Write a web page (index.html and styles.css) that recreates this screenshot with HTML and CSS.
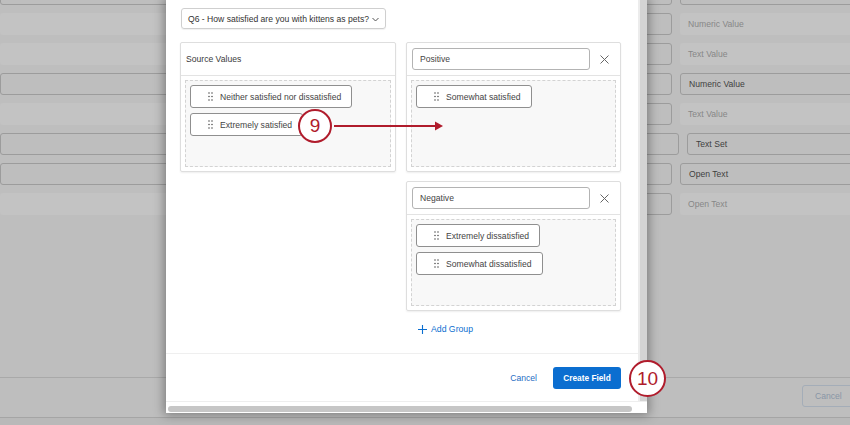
FILE: index.html
```html
<!DOCTYPE html>
<html lang="en">
<head>
    <meta charset="UTF-8">
    <meta name="viewport" content="width=device-width, initial-scale=1.0">
    <title>Create Field - Bucket values</title>
    <link rel="stylesheet" href="styles.css">
</head>
<body>
    <!-- page behind the dialog, dimmed -->
    <div class="page">
        <div class="rows">
            <div class="row bordered"><div class="wide"></div><div class="small"></div><div class="type"></div></div>
            <div class="row faint"><div class="wide"></div><div class="small"></div><div class="type">Numeric Value</div></div>
            <div class="row faint"><div class="wide"></div><div class="small"></div><div class="type">Text Value</div></div>
            <div class="row bordered"><div class="wide"></div><div class="small"></div><div class="type">Numeric Value</div></div>
            <div class="row faint"><div class="wide"></div><div class="small"></div><div class="type">Text Value</div></div>
            <div class="row bordered indent"><div class="wide"></div><div class="small"></div><div class="type">Text Set</div></div>
            <div class="row bordered"><div class="wide"></div><div class="small"></div><div class="type">Open Text</div></div>
            <div class="row faint"><div class="wide"></div><div class="small"></div><div class="type">Open Text</div></div>
        </div>
        <div class="page-footer">
            <div class="page-cancel">Cancel</div>
        </div>
        <div class="page-bottom"></div>
    </div>

    <div class="modal">
        <div class="modal-main">
            <div class="modal-content">
                <div class="content">
                    <div class="question-select">
                        <span>Q6 - How satisfied are you with kittens as pets?</span>
                        <svg class="chevron" width="7" height="5" viewBox="0 0 7 5"><polyline points="0.5,1 3.5,4 6.5,1" fill="none" stroke="#555" stroke-width="1"/></svg>
                    </div>

                    <div class="groups">
                        <div class="group source">
                            <div class="group-head"><span class="source-title">Source Values</span></div>
                            <div class="drop">
                                <div class="item"><svg class="handle" width="5" height="9" viewBox="0 0 5 9"><circle cx="1" cy="1" r="0.8"/><circle cx="4" cy="1" r="0.8"/><circle cx="1" cy="4.5" r="0.8"/><circle cx="4" cy="4.5" r="0.8"/><circle cx="1" cy="8" r="0.8"/><circle cx="4" cy="8" r="0.8"/></svg>Neither satisfied nor dissatisfied</div>
                                <div class="item"><svg class="handle" width="5" height="9" viewBox="0 0 5 9"><circle cx="1" cy="1" r="0.8"/><circle cx="4" cy="1" r="0.8"/><circle cx="1" cy="4.5" r="0.8"/><circle cx="4" cy="4.5" r="0.8"/><circle cx="1" cy="8" r="0.8"/><circle cx="4" cy="8" r="0.8"/></svg>Extremely satisfied</div>
                            </div>
                        </div>

                        <div class="group">
                            <div class="group-head">
                                <div class="group-name">Positive</div>
                                <svg class="remove" width="9" height="9" viewBox="0 0 9 9"><path d="M0.5 0.5L8.5 8.5M8.5 0.5L0.5 8.5" stroke="#666" stroke-width="1"/></svg>
                            </div>
                            <div class="drop">
                                <div class="item"><svg class="handle" width="5" height="9" viewBox="0 0 5 9"><circle cx="1" cy="1" r="0.8"/><circle cx="4" cy="1" r="0.8"/><circle cx="1" cy="4.5" r="0.8"/><circle cx="4" cy="4.5" r="0.8"/><circle cx="1" cy="8" r="0.8"/><circle cx="4" cy="8" r="0.8"/></svg>Somewhat satisfied</div>
                            </div>
                        </div>

                        <div class="group negative">
                            <div class="group-head">
                                <div class="group-name">Negative</div>
                                <svg class="remove" width="9" height="9" viewBox="0 0 9 9"><path d="M0.5 0.5L8.5 8.5M8.5 0.5L0.5 8.5" stroke="#666" stroke-width="1"/></svg>
                            </div>
                            <div class="drop">
                                <div class="item"><svg class="handle" width="5" height="9" viewBox="0 0 5 9"><circle cx="1" cy="1" r="0.8"/><circle cx="4" cy="1" r="0.8"/><circle cx="1" cy="4.5" r="0.8"/><circle cx="4" cy="4.5" r="0.8"/><circle cx="1" cy="8" r="0.8"/><circle cx="4" cy="8" r="0.8"/></svg>Extremely dissatisfied</div>
                                <div class="item"><svg class="handle" width="5" height="9" viewBox="0 0 5 9"><circle cx="1" cy="1" r="0.8"/><circle cx="4" cy="1" r="0.8"/><circle cx="1" cy="4.5" r="0.8"/><circle cx="4" cy="4.5" r="0.8"/><circle cx="1" cy="8" r="0.8"/><circle cx="4" cy="8" r="0.8"/></svg>Somewhat dissatisfied</div>
                            </div>
                        </div>
                    </div>

                    <div class="add-group">
                        <svg width="9" height="9" viewBox="0 0 9 9"><path d="M4.5 0V9M0 4.5H9" stroke="#0b6ed0" stroke-width="1.1"/></svg>
                        <span>Add Group</span>
                    </div>
                </div>

                <div class="footer">
                    <span class="cancel">Cancel</span>
                    <button class="create">Create Field</button>
                </div>
            </div>
            <div class="vscroll"></div>
        </div>
        <div class="hscroll"><div class="hthumb"></div></div>
    </div>

    <!-- tutorial callouts -->
    <div class="callout step-9">9</div>
    <svg class="arrow" width="112" height="14" viewBox="0 0 112 14">
        <path d="M0 7H103" stroke="#b01c2c" stroke-width="2.2"/>
        <path d="M101 2.5L109 7L101 11.5Z" fill="#b01c2c"/>
    </svg>
    <div class="callout step-10">10</div>
</body>
</html>
```

FILE: styles.css
```css
body {
    margin: 0;
    width: 850px;
    height: 425px;
    overflow: hidden;
    background: #bebebe;
    font-family: "Liberation Sans", Arial, sans-serif;
    font-size: 8.6px;
    position: relative;
}

/* background page */
.page {
    height: 425px;
    display: flex;
    flex-direction: column;
}
.rows {
    margin-top: -17px;
    flex: 1;
}
.row {
    display: flex;
    gap: 8px;
    height: 22px;
    margin-bottom: 8px;
}
.row div {
    flex-shrink: 0;
    box-sizing: border-box;
    border-radius: 3px;
}
.wide { width: 600px; }
.small { width: 64px; }
.indent .small { width: 71px; }
.type {
    width: 190px;
    display: flex;
    align-items: center;
    padding-left: 8px;
}
.faint .wide, .faint .type {
    background: #c3c3c3;
    color: #878787;
}
.faint .small, .bordered div {
    border: 1px solid #9c9c9c;
}
.bordered .type {
    color: #3e3e3e;
}
.page-footer {
    height: 40px;
    border-top: 1px solid #a9a9a9;
    display: flex;
    justify-content: flex-end;
    align-items: flex-start;
    padding-top: 7px;
    box-sizing: border-box;
}
.page-cancel {
    width: 62px;
    height: 22px;
    margin-right: -14px;
    box-sizing: border-box;
    border: 1px solid #a4adb8;
    border-radius: 3px;
    color: #8996a6;
    padding-left: 12px;
    line-height: 20px;
}
.page-bottom {
    height: 7px;
    border-top: 1px solid #a5a5a5;
    background: #b9b9b9;
}

/* dialog */
.modal {
    position: absolute;
    left: 166px;
    top: 0;
    width: 481px;
    height: 413px;
    background: #fff;
    box-shadow: 0 0 10px 2px rgba(0, 0, 0, 0.35);
    display: flex;
    flex-direction: column;
    color: #333;
}
.modal-main {
    flex: 1;
    display: flex;
}
.modal-content {
    flex: 1;
    display: flex;
    flex-direction: column;
}
.content {
    flex: 1;
    padding: 8px 17px 0 14px;
}
.vscroll {
    width: 7px;
    background: #d4d4d4;
    border-left: 2px solid #ececec;
}
.hscroll {
    height: 12px;
    box-sizing: border-box;
    padding: 4px 0 2px 2px;
    border-top: 1px solid #eeeeee;
}
.hthumb {
    width: 464px;
    height: 6px;
    border-radius: 3px;
    background: #c6c6c6;
}

.question-select {
    margin-left: 1px;
    width: 205px;
    height: 21px;
    box-sizing: border-box;
    border: 1px solid #cfcfcf;
    border-radius: 3px;
    box-shadow: 0 1px 1px rgba(0, 0, 0, 0.06);
    display: flex;
    align-items: center;
    justify-content: space-between;
    padding: 0 6px 0 6px;
}
.chevron { margin-top: 1px; }

.groups {
    margin-top: 13px;
    display: grid;
    grid-template-columns: 216px 215px;
    column-gap: 10px;
    row-gap: 9px;
}
.group {
    height: 130px;
    box-sizing: border-box;
    border: 1px solid #dedede;
    border-radius: 2px;
    box-shadow: 0 1px 2px rgba(0, 0, 0, 0.07);
}
.negative { grid-column: 2; }
.group-head {
    height: 33px;
    box-sizing: border-box;
    border-bottom: 1px solid #e3e3e3;
    display: flex;
    align-items: center;
    padding: 0 11px 0 5px;
    gap: 10px;
}
.source-title { color: #3a3a3a; }
.group-name {
    flex: 1;
    height: 22px;
    box-sizing: border-box;
    border: 1px solid #b3b3b3;
    border-radius: 3px;
    display: flex;
    align-items: center;
    padding-left: 7px;
    color: #444;
}
.drop {
    margin: 4px;
    height: 87px;
    box-sizing: border-box;
    border: 1px dashed #d3d3d3;
    background: #f8f8f8;
    padding: 4px;
    display: flex;
    flex-direction: column;
    align-items: flex-start;
    gap: 5px;
}
.item {
    height: 23px;
    box-sizing: border-box;
    border: 1px solid #8f8f8f;
    border-radius: 3px;
    background: #fff;
    display: flex;
    align-items: center;
    padding: 0 10px 0 17px;
    color: #444;
}
.handle {
    fill: #555;
    margin-right: 7px;
}

.add-group {
    margin-top: 12px;
    margin-left: 238px;
    display: flex;
    align-items: center;
    gap: 4px;
    color: #0b6ed0;
    height: 12px;
    font-size: 8.7px;
}

.footer {
    height: 48px;
    box-sizing: border-box;
    border-top: 1px solid #efefef;
    display: flex;
    justify-content: flex-end;
    align-items: center;
    padding-right: 17px;
    gap: 16px;
}
.cancel { color: #1f6ec4; }
.create {
    height: 22px;
    width: 68px;
    border: none;
    border-radius: 3px;
    background: #0b6ed0;
    color: #fff;
    font-family: "Liberation Sans", Arial, sans-serif;
    font-size: 8.3px;
    font-weight: bold;
    padding: 0;
}

/* callouts */
.callout {
    position: absolute;
    box-sizing: border-box;
    border: 2.5px solid #b01c2c;
    border-radius: 50%;
    background: #fff;
    color: #b01c2c;
    font-size: 19px;
    display: flex;
    align-items: center;
    justify-content: center;
}
.step-9 {
    left: 298px;
    top: 109px;
    width: 34px;
    height: 34px;
}
.step-10 {
    left: 629px;
    top: 360px;
    width: 37px;
    height: 37px;
}
.arrow {
    position: absolute;
    left: 334px;
    top: 119px;
}
```
